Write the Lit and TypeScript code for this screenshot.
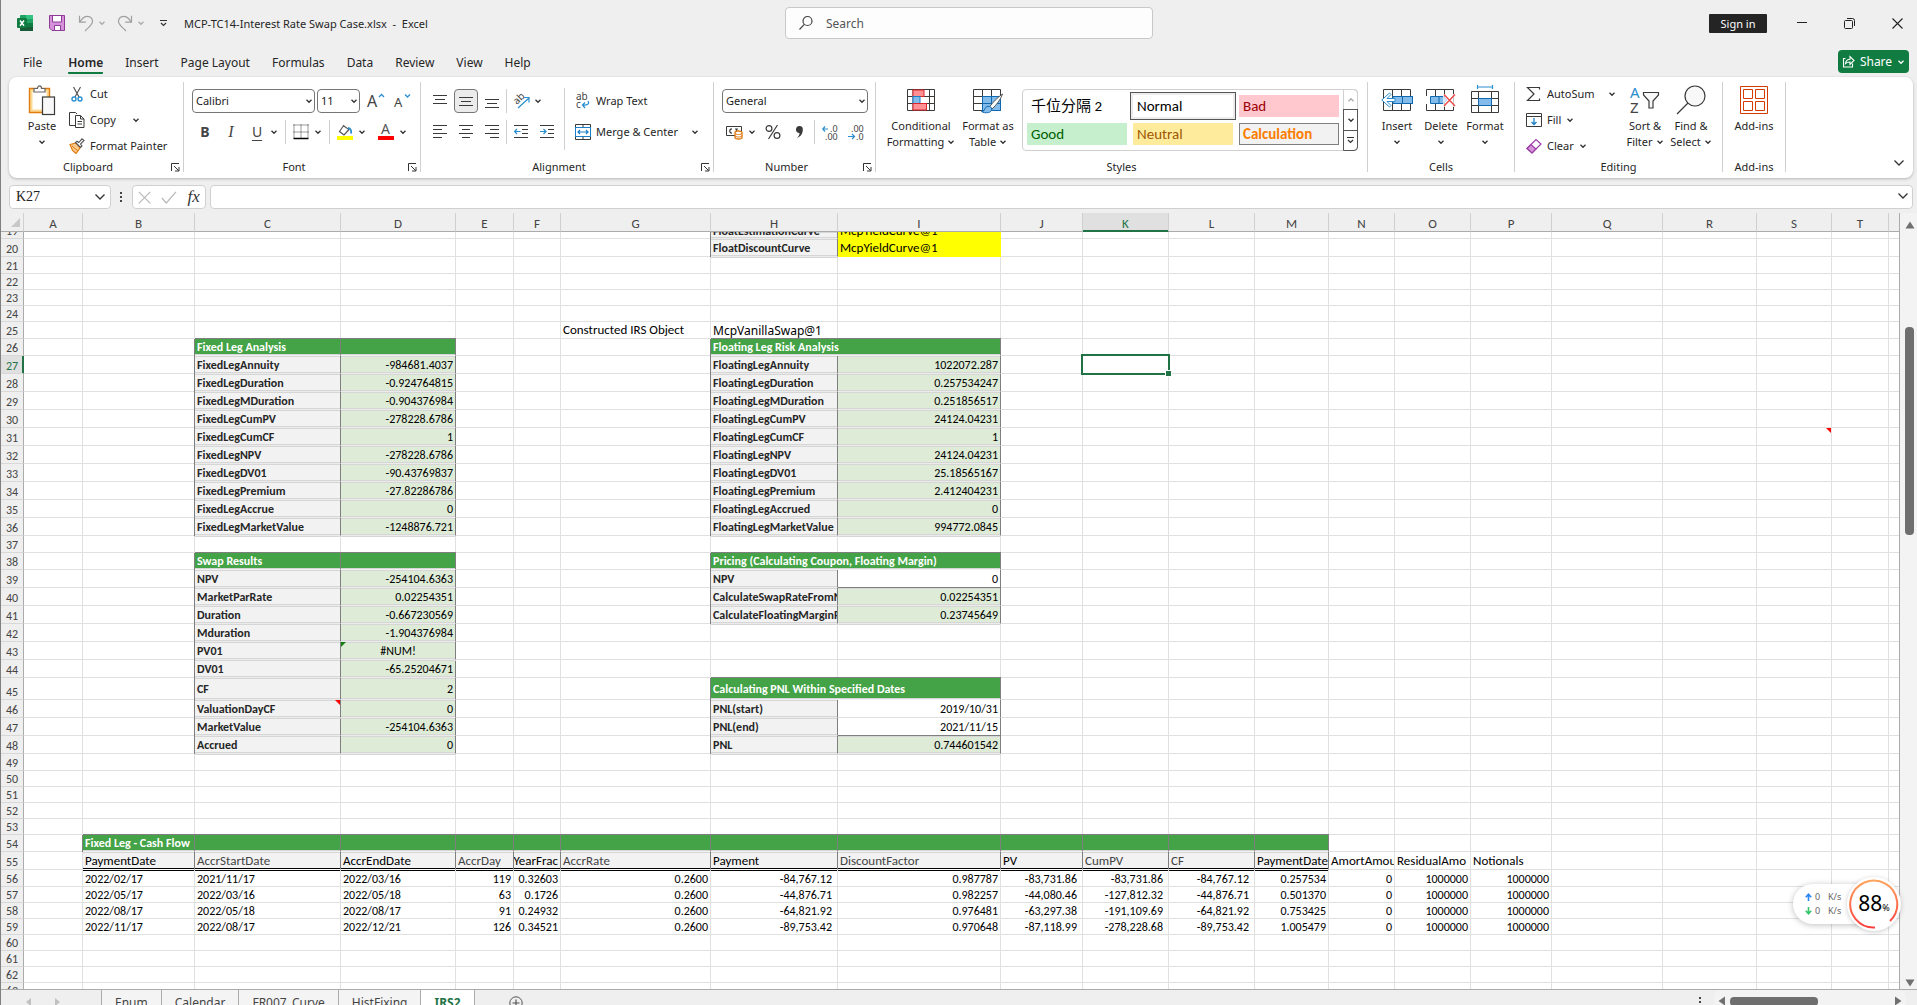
import { LitElement, html, css, svg, nothing, TemplateResult } from 'lit';
import { customElement, state } from 'lit/decorators.js';
import { classMap } from 'lit/directives/class-map.js';

/* ---------- icons ---------- */
const ic = (w: number, h: number, body: unknown) =>
  html`<svg width=${w} height=${h} viewBox="0 0 ${w} ${h}" fill="none" stroke="#3b3a39" aria-hidden="true">${body}</svg>`;

const chev = (color = '#333') => ic(8, 8, svg`<path d="M1.5 2.8 4 5.3 6.500 2.8" stroke=${color} stroke-width="1.3"/>`);
const bigChev = () => ic(12, 8, svg`<path d="M1.500 1.500 6 6 10.500 1.500" stroke="#333" stroke-width="1.3"/>`);

const icons = {
  excel: ic(16, 16, svg`<g stroke="none"><rect x="3" width="13" height="16" rx="1" fill="#21a366"/><rect x="9" width="7" height="4" fill="#33c481"/><rect x="3" y="4" width="6" height="4" fill="#107c41"/><rect x="9" y="8" width="7" height="4" fill="#107c41"/><rect x="3" y="8" width="6" height="8" fill="#185c37"/><rect x="9" y="12" width="7" height="4" fill="#185c37"/><rect y="3" width="10" height="10" rx="1" fill="#107c41"/></g><path d="M3 5.500 7 10.700M7 5.500 3 10.700" stroke="#fff" stroke-width="1.5"/>`),
  save: ic(16, 16, svg`<path d="M.5.5h15v15H3l-2.500-2.500z" fill="#d592d8" stroke="#8d3a99"/><path d="M3.500.5h9V7h-9zM5.500 15.500v-5h6v5z" fill="#fff" stroke="#8d3a99"/>`),
  undo: ic(16, 17, svg`<path d="M1.500.8v6.400h6.300M1.700 6.900 5 3C8 0 14.500 1 14.500 6.500c0 3-2.500 4.500-7.500 9.500" stroke="#a0a0a0" stroke-width="1.2"/>`),
  redo: ic(16, 17, svg`<path d="M14.500.8v6.400H8.200M14.300 6.900 11 3C8 0 1.500 1 1.500 6.500c0 3 2.500 4.500 7.500 9.500" stroke="#a0a0a0" stroke-width="1.2"/>`),
  qat: ic(9, 9, svg`<path d="M1 1.500h7M2 4l2.500 2.500L7 4" stroke="#333" stroke-width="1.2"/>`),
  search: ic(16, 16, svg`<circle cx="9.500" cy="6" r="4.500" stroke="#444" stroke-width="1.2"/><path d="M6.300 9.300 1.500 14.500" stroke="#444" stroke-width="1.200"/>`),
  min: ic(10, 10, svg`<path d="M0 4.500h10" stroke="#222"/>`),
  restore: ic(11, 11, svg`<rect x=".5" y="2.500" width="8" height="8" rx="1" stroke="#222"/><path d="M3 .5h5.500q2 0 2 2V8" stroke="#222"/>`),
  close: ic(11, 11, svg`<path d="m.5.500 10 10m0-10-10 10" stroke="#222" stroke-width="1.100"/>`),
  share: ic(13, 13, svg`<path d="M3.500 3.500h-2v8.500h9V8.500M3.500 8.500c.5-3 2-4.200 4.500-4.200V1.500l4 4-4 4V7c-2 0-3.300.3-4.500 1.500z" stroke="#fff" stroke-width="1.100"/>`),
  paste: ic(28, 32, svg`<path d="M1.500 4.500h20v24h-20z" stroke="#e07b10" fill="#fbd98e" stroke-width="1.400"/><path d="M4.500 7.500h14v18h-14z" fill="#fff" stroke="none"/><path d="M6 8V4.500h3.500C9.500 1 13.500 1 13.500 4.500H17V8z" fill="#fff" stroke="#666" stroke-width="1.200"/><rect x="14.500" y="13" width="12" height="17.500" fill="#f8f8f8" stroke-width="1.200"/>`),
  cut: ic(16, 16, svg`<path d="m4.500 1 5.500 10M11.500 1 6 11" stroke="#555" stroke-width="1.200"/><circle cx="5" cy="13" r="2" stroke="#2a8fd0" stroke-width="1.400"/><circle cx="11" cy="13" r="2" stroke="#2a8fd0" stroke-width="1.400"/>`),
  copy: ic(16, 16, svg`<path d="M6 13.500H.5v-13h6L8 2" /><path d="M6.500 3.500h5l3.500 3.500v8.500H6.500z" fill="#fff"/><path d="M11.500 3.500V7H15M8.500 9.500h4.500M8.500 12h4.500"/>`),
  painter: ic(16, 16, svg`<path d="M1 6.500 7 5l4 5-4 5.500L3.500 12.500z" fill="#fbc98a" stroke="#e07b10" stroke-width="1.200"/><path d="m3 8 6 5" stroke="#e07b10"/><path d="m6.500 4.500 5 5 1.500-1.500-1.500-2L15 2.500 13 .8 9.800 4.500 8 3.200z" fill="#fff" stroke="#555" stroke-width="1.100"/>`),
  growA: ic(18, 18, svg`<text x="0" y="15" font-size="16" fill="#444" stroke="none">A</text><path d="m12 5 2.500-2.500L17 5" stroke="#2a8fd0" stroke-width="1.300"/>`),
  shrinkA: ic(18, 18, svg`<text x="1" y="15" font-size="13" fill="#444" stroke="none">A</text><path d="m12 2.500 2.500 2.500L17 2.500" stroke="#2a8fd0" stroke-width="1.300"/>`),
  borders: ic(16, 16, svg`<path d="M.5 1h15M.5 8h15M1 .5v14M8 .5v14M15 .5v14" stroke-dasharray="1 1"/><path d="M.5 14.500h15" stroke="#000" stroke-width="1.400"/>`),
  fill: ic(16, 18, svg`<path d="m7 2-4.500 6.500L7 12l5-5.500L6 2.500" stroke="#555" stroke-width="1.200"/><path d="M11 5c3 .5 3.500 3 3 5.500" stroke="#2a8fd0" stroke-width="1.800"/><rect y="13" width="16" height="4" fill="#ff0" stroke="none"/>`),
  fontColor: ic(16, 18, svg`<text x="3" y="11" font-size="14" fill="#555" stroke="none">A</text><rect y="13" width="16" height="4" fill="#f00" stroke="none"/>`),
  top: ic(14, 14, svg`<path d="M0 1.500h14M2 5.500h10M0 9.500h14"/>`),
  mid: ic(14, 14, svg`<path d="M0 3.500h14M2 7.500h10M0 11.500h14"/>`),
  bot: ic(14, 14, svg`<path d="M0 5.500h14M2 9.500h10M0 13.500h14"/>`),
  left: ic(14, 14, svg`<path d="M0 .5h14M0 4.500h9M0 8.500h14M0 12.500h9"/>`),
  center: ic(14, 14, svg`<path d="M0 .5h14M3 4.500h8M0 8.500h14M3 12.500h8"/>`),
  right: ic(14, 14, svg`<path d="M0 .5h14M5 4.500h9M0 8.500h14M5 12.500h9"/>`),
  orient: ic(17, 16, svg`<text x="0" y="0" font-size="10" fill="#444" stroke="none" transform="translate(4 12) rotate(-45)">ab</text><path d="m5 15 11-10M11 4.500h5v5" stroke="#2a8fd0" stroke-width="1.200"/>`),
  outdent: ic(14, 14, svg`<path d="M0 .5h14M8 4.500h6M8 8.500h6M0 12.500h14"/><path d="M6.500 6.500H.8M3 4 .7 6.500 3 9" stroke="#2a8fd0" stroke-width="1.200"/>`),
  indent: ic(14, 14, svg`<path d="M0 .5h14M8 4.500h6M8 8.500h6M0 12.500h14"/><path d="M0 6.500h5.700M3.500 4 6 6.500 3.500 9" stroke="#2a8fd0" stroke-width="1.200"/>`),
  wrap: ic(16, 18, svg`<text x="1" y="8" font-size="10" fill="#444" stroke="none">ab</text><text x="1" y="16" font-size="10" fill="#444" stroke="none">c</text><path d="M13 9c2 3-1 4.500-5.500 4M10 10.500 7.500 13l2.500 3" stroke="#2a8fd0" stroke-width="1.300"/>`),
  merge: ic(16, 16, svg`<path d="M.5.500h15v15H.5zM8 .5v3M8 12.500v3"/><rect x=".5" y="3.500" width="15" height="9" fill="#fff" stroke="#1a7fc8"/><path d="M3 8h10M5 6 3 8l2 2M11 6l2 2-2 2" stroke="#1a7fc8" stroke-width="1.200"/>`),
  currency: ic(18, 15, svg`<path d="M.5 1.500h15v9H.5z"/><path d="M6 4C3 3.500 3 8.500 6 8M10.500 4v4M9 4h3" stroke-width="1.200"/><path d="M9 7.500v5c0 2 7 2 7 0v-5c0-2-7-2-7 0z" fill="#fff" stroke="#e07b10" stroke-width="1.300"/><path d="M9 8c0 2 7 2 7 0M9 10.500c0 2 7 2 7 0" stroke="#e07b10"/>`),
  percent: ic(16, 16, svg`<circle cx="4" cy="4.500" r="2.900" stroke-width="1.200"/><circle cx="12" cy="11.500" r="2.900" stroke-width="1.200"/><path d="M12.500 1 3.500 15" stroke-width="1.200"/>`),
  comma: ic(9, 14, svg`<path d="M4.500 1a3.300 3.300 0 0 1 3.300 3.500C7.800 8.500 6 11.500 2 13c1.500-1.500 2.500-3 2.500-5A3.300 3.300 0 0 1 4.500 1z" fill="#3b3a39" stroke="none"/>`),
  incDec: ic(17, 17, svg`<path d="M6 5H1M3 2.500.8 5 3 7.500" stroke="#2a8fd0" stroke-width="1.200"/><text x="8" y="8" font-size="9" fill="#444" stroke="none">.0</text><text x="3" y="16" font-size="9" fill="#444" stroke="none">.00</text>`),
  decDec: ic(17, 17, svg`<text x="3" y="8" font-size="9" fill="#444" stroke="none">.00</text><path d="M0 12.500h6.500M4 10l2.500 2.500L4 15" stroke="#2a8fd0" stroke-width="1.200"/><text x="8" y="16" font-size="9" fill="#444" stroke="none">.0</text>`),
  cond: ic(28, 22, svg`<path d="M.5.500h27v21H.5zM.5 7.500h27M.5 14.500h27M6 .5v21M22.500 .5v21" fill="#fff"/><rect x="6" y="1" width="11" height="6.500" fill="#ff9094" stroke="#d8262c"/><rect x="6" y="7.500" width="7" height="7" fill="#83bbea" stroke="#1a7fc8"/><rect x="6" y="14.500" width="13.500" height="6.500" fill="#ff9094" stroke="#d8262c"/>`),
  table: ic(31, 28, svg`<path d="M.5 3.500h27v21H.5zM.5 10.500h27M.5 17.500h27M9.500 3.500v21M18.500 3.500v21" fill="#fff"/><path d="M9.500 10.500h18v14h-18zM9.500 17.500h18M18.500 10.500v14" fill="#83bbea" stroke="#1068b0"/><path d="M29.500 8C25 11 19 17 16.500 21l2.500 2C23 19.500 28 13 29.500 8z" fill="#fff" stroke="#555"/><path d="M16.500 20.500c3.500 1 2.500 5.500-1 6-3 .6-5 .2-7-1 2.500 0 2.500-1 3.500-3 .8-1.800 2.500-2.500 4.500-2z" fill="#83bbea" stroke="#1068b0"/>`),
  insert: ic(32, 22, svg`<path d="M2.500.5h27v21h-27zM11.500.500v21M20.500.500v21" fill="#fff"/><rect x="12" y="7.500" width="19.500" height="7" fill="#83bbea" stroke="#1068b0"/><path d="M21.500 7.500v7" stroke="#1068b0"/><path d="M14 9.500H6l4-4-1.500-1.500L.8 11l7.700 7L10 16.500l-4-4h8z" fill="#fff" stroke="#2a8fd0"/>`),
  del: ic(30, 22, svg`<path d="M.5.500h27v21H.5zM9.500.500v21M18.500.500v21" fill="#fff"/><path d="M0 7.500h4v7H0z" fill="#fff" stroke="#fff"/><path d="M4.500 7.500H17l4 3.500-4 3.500H4.500zM13 7.500v7" fill="#83bbea" stroke="#1068b0"/><path d="M17 5h12v13H17z" fill="#fff" stroke="none" opacity=".7"/><path d="m18 5.500 11 11.500M29 5.500 18 17" stroke="#f04a4a" stroke-width="1.400"/>`),
  format: ic(28, 32, svg`<path d="M6.500 1v4M21.500 1v4M6.500 3h15" stroke="#2a8fd0" stroke-width="1.200"/><path d="M.5 7.500h27v21H.5zM.5 14.500h27M.5 21.500h27M7.500 7.500v21M20.500 7.500v21" fill="#fff"/><rect x="7.500" y="14.500" width="13" height="7" fill="#83bbea" stroke="#1068b0"/>`),
  sum: ic(16, 16, svg`<path d="M13.500 3.500v-2H1.500l6.500 6.500-6.500 6.500h12v-2" stroke-width="1.200"/>`),
  fillDown: ic(16, 16, svg`<path d="M.5 1.500h15v13H.5zM.5 4.500h15"/><path d="M8 6v6.500M5.500 10 8 12.500 10.500 10" stroke="#1a7fc8" stroke-width="1.300"/>`),
  clear: ic(16, 16, svg`<path d="m1 10.500 9-9 5 4.500-9 9z" fill="#fff" stroke="#9b3fa5" stroke-width="1.200"/><path d="m1 10.500 4-4 5 4.500-4 4z" fill="#d592d8" stroke="#9b3fa5" stroke-width="1.200"/>`),
  sort: ic(30, 28, svg`<text x="0" y="12" font-size="15" fill="#2a8fd0" stroke="none">A</text><text x="0" y="27" font-size="15" fill="#444" stroke="none">Z</text><path d="M13.500 6.500h15v2.500l-5.500 6v7h-4v-7l-5.500-6z" fill="#f8f8f8" stroke-width="1.200"/>`),
  find: ic(30, 30, svg`<circle cx="19" cy="11" r="10" fill="#f8f8f8" stroke-width="1.200"/><path d="M12 18 1 29" stroke-width="1.200"/>`),
  addins: ic(28, 28, svg`<path d="M.5.500h27v27H.5zM3.500 3.500h9v9h-9zM15.500 3.500h9v9h-9zM3.500 15.500h9v9h-9zM15.500 15.500h9v9h-9z" stroke="#d83b01" fill="#fff"/>`),
  launch: ic(9, 9, svg`<path d="M.5 8V.500H8M3 3l4.500 4.500M8 4v4H4" stroke="#333"/>`),
  scrollUp: ic(10, 8, svg`<path d="M5 .5 9.500 7.500H.5z" fill="#707070" stroke="none"/>`),
  scrollDown: ic(10, 8, svg`<path d="M5 7.500 9.500.5H.5z" fill="#707070" stroke="none"/>`),
  plus: ic(14, 14, svg`<circle cx="7" cy="7" r="6.200" stroke="#555"/><path d="M7 3.500v7M3.500 7h7" stroke="#555" stroke-width="1.200"/>`),
};

/* ---------- sheet data ---------- */
type Cell = { t?: string; c?: string; span?: number; mark?: 'red' | 'green'; sel?: boolean };
const COLS = 'ABCDEFGHIJKLMNOPQRSTU'.split('');
const WIDTHS = [59, 112, 146, 115, 58, 47, 150, 127, 163, 82, 86, 86, 74, 66, 76, 81, 111, 94, 75, 57];
const heights = (r: number) =>
  r === 19 ? 7 : r === 45 ? 22 : [21, 25, 26, 37, 38, 49, 54, 56].includes(r) ? 17
    : r === 20 || (r >= 27 && r <= 48) || r === 55 ? 18 : 16;

const cells: Record<string, Cell> = {
  H19: { t: 'FloatEstimationCurve', c: 'lab first' }, I19: { t: 'McpYieldCurve@1', c: 'yellow' },
  H20: { t: 'FloatDiscountCurve', c: 'lab first' }, I20: { t: 'McpYieldCurve@1', c: 'yellow' },
  G25: { t: 'Constructed IRS Object', c: 'note' }, H25: { t: 'McpVanillaSwap@1', c: 'wide' },
  C26: { t: 'Fixed Leg Analysis', c: 'head first' }, D26: { c: 'head' },
  H26: { t: 'Floating Leg Risk Analysis', c: 'head first', span: 2 },
  C38: { t: 'Swap Results', c: 'head first' }, D38: { c: 'head' },
  H38: { t: 'Pricing (Calculating Coupon, Floating Margin)', c: 'head first', span: 2 },
  H45: { t: 'Calculating PNL Within Specified Dates', c: 'head first', span: 2 },
  K27: { sel: true }, S31: { mark: 'red' },
};
const pairs = (lc: string, vc: string, start: number, rows: [string, string, string?][]) =>
  rows.forEach(([l, v, cls], i) => {
    cells[lc + (start + i)] = { t: l, c: 'lab first' };
    cells[vc + (start + i)] = { t: v, c: cls ?? 'val num' };
  });
pairs('C', 'D', 27, [['FixedLegAnnuity', '-984681.4037'], ['FixedLegDuration', '-0.924764815'], ['FixedLegMDuration', '-0.904376984'], ['FixedLegCumPV', '-278228.6786'], ['FixedLegCumCF', '1'], ['FixedLegNPV', '-278228.6786'], ['FixedLegDV01', '-90.43769837'], ['FixedLegPremium', '-27.82286786'], ['FixedLegAccrue', '0'], ['FixedLegMarketValue', '-1248876.721']]);
pairs('H', 'I', 27, [['FloatingLegAnnuity', '1022072.287'], ['FloatingLegDuration', '0.257534247'], ['FloatingLegMDuration', '0.251856517'], ['FloatingLegCumPV', '24124.04231'], ['FloatingLegCumCF', '1'], ['FloatingLegNPV', '24124.04231'], ['FloatingLegDV01', '25.18565167'], ['FloatingLegPremium', '2.412404231'], ['FloatingLegAccrued', '0'], ['FloatingLegMarketValue', '994772.0845']]);
pairs('C', 'D', 39, [['NPV', '-254104.6363'], ['MarketParRate', '0.02254351'], ['Duration', '-0.667230569'], ['Mduration', '-1.904376984'], ['PV01', '#NUM!', 'val mid'], ['DV01', '-65.25204671'], ['CF', '2'], ['ValuationDayCF', '0'], ['MarketValue', '-254104.6363'], ['Accrued', '0']]);
pairs('H', 'I', 39, [['NPV', '0', 'plain num end'], ['CalculateSwapRateFromNPV', '0.02254351'], ['CalculateFloatingMarginFromNPV', '0.23745649']]);
pairs('H', 'I', 46, [['PNL(start)', '2019/10/31', 'plain num'], ['PNL(end)', '2021/11/15', 'plain num end'], ['PNL', '0.744601542']]);
cells.D43.mark = 'green';
cells.C46.mark = 'red';

'BCDEFGHIJKLM'.split('').forEach((c, i) => (cells[c + 54] = i === 0 ? { t: 'Fixed Leg - Cash Flow', c: 'head first' } : { c: 'head' }));
['PaymentDate', 'AccrStartDate', 'AccrEndDate', 'AccrDay', 'YearFrac', 'AccrRate', 'Payment', 'DiscountFactor', 'PV', 'CumPV', 'CF', 'PaymentDate'].forEach((t, i) => {
  cells[COLS[i + 1] + 55] = { t, c: 'field' + ([1, 3, 5, 7, 9, 10].includes(i) ? ' dim' : '') + (i === 4 ? ' tail' : '') };
});
cells.N55 = { t: 'AmortAmou', c: 'note' }; cells.O55 = { t: 'ResidualAmo', c: 'note' }; cells.P55 = { t: 'Notionals', c: 'note' };
[
  ['2022/02/17', '2021/11/17', '2022/03/16', '119', '0.32603', '0.2600', '-84,767.12', '0.987787', '-83,731.86', '-83,731.86', '-84,767.12', '0.257534', '0', '1000000', '1000000'],
  ['2022/05/17', '2022/03/16', '2022/05/18', '63', '0.1726', '0.2600', '-44,876.71', '0.982257', '-44,080.46', '-127,812.32', '-44,876.71', '0.501370', '0', '1000000', '1000000'],
  ['2022/08/17', '2022/05/18', '2022/08/17', '91', '0.24932', '0.2600', '-64,821.92', '0.976481', '-63,297.38', '-191,109.69', '-64,821.92', '0.753425', '0', '1000000', '1000000'],
  ['2022/11/17', '2022/08/17', '2022/12/21', '126', '0.34521', '0.2600', '-89,753.42', '0.970648', '-87,118.99', '-278,228.68', '-89,753.42', '1.005479', '0', '1000000', '1000000'],
].forEach((row, r) => row.forEach((t, i) => {
  cells[COLS[i + 1] + (56 + r)] = { t, c: i < 3 ? 'date' : [6, 8, 9, 10].includes(i) ? 'num acct' : 'num' };
}));

@customElement('excel-sheet')
export class ExcelSheet extends LitElement {
  static styles = css`
    :host { display: block; flex: 1; min-width: 0; overflow: hidden; border-right: 1px solid #ababab; background: #fff; font-family: Carlito, Calibri, Lato, sans-serif; }
    table { width: 100%; table-layout: fixed; border-collapse: separate; border-spacing: 0; font-size: 13px; line-height: 14px; color: #000; }
    th, td { padding: 0; border-right: 1px solid #e0e0e0; border-bottom: 1px solid #e0e0e0; white-space: nowrap; vertical-align: bottom; text-align: left; }
    th { background: #efefef; color: #444; font-weight: 400; text-align: center; }
    thead tr { height: 19px; }
    thead th { border-right-color: #d0d0d0; border-bottom-color: #ababab; }
    thead th:last-child { border-right: 0; }
    tbody th { border-right-color: #ababab; border-bottom-color: #d8d8d8; font-size: 12px; }
    td:last-child { border-right: 0; }
    th.on { background: #e0e0e0; color: #217346; }
    thead th.on { box-shadow: inset 0 -1px #217346; border-bottom-color: #217346; }
    tbody th.on { border-right-color: #217346; box-shadow: inset -1px 0 #217346; }
    .corner svg { display: block; margin: 0 3px 4px auto; }
    .txt { overflow: hidden; padding: 0 2px; }
    .part { height: 6px; display: flex; align-items: flex-end; }
    th .part { justify-content: center; overflow: hidden; }
    .num .txt { text-align: right; }
    .num, .date, .lab, .val, .head { font-size: 12px; }
    .acct .txt { padding-right: 5px; }
    .mid .txt { text-align: center; }
    .wide { font-family: "Noto Sans", sans-serif; font-size: 12px; }
    .yellow { background: #ff0; border-color: #ff0; }
    .lab, .val, .plain, .head, .yellow, .field, .note { vertical-align: middle; }
    .lab, .val { border-right-color: #7f7f7f; border-bottom-color: #ebebeb; box-shadow: inset 0 1px #d6d6d6, inset 0 -1px #d6d6d6, 0 1px #d6d6d6; }
    .lab { background: #f2f2f2; color: #262626; font-weight: 700; }
    .val { background: #deebd7; }
    .lab.first { box-shadow: -1px 0 #7f7f7f, inset 0 1px #d6d6d6, inset 0 -1px #d6d6d6, 0 1px #d6d6d6; }
    .plain { border-right-color: #7f7f7f; background: #fff; }
    .end { border-bottom-color: #7f7f7f; }
    .head { background: #43a346; color: #fff; font-weight: 700; border-right-color: #7f7f7f; border-bottom-color: #f2f2f2; box-shadow: 0 -1px #7f7f7f, inset 0 -1px #d6d6d6; }
    .head.first { box-shadow: -1px 0 #7f7f7f, 0 -1px #7f7f7f, inset 0 -1px #d6d6d6; }
    .field { background: #f2f2f2; border-right-color: #7f7f7f; border-bottom-color: #fff; box-shadow: inset 0 1px #d6d6d6, inset 0 -1px #000, 0 1px #000; }
    .dim { color: #444; }
    .tail .txt { display: flex; justify-content: flex-end; }
    .anchor { position: relative; }
    .mark { position: absolute; top: 0; width: 5px; height: 5px; }
    .mark.red { right: 0; background: #f00; clip-path: polygon(0 0, 100% 0, 100% 100%); }
    .mark.green { left: 0; background: #107c10; clip-path: polygon(0 0, 100% 0, 0 100%); }
    .cursor { position: absolute; inset: -2px; border: 2px solid #217346; }
    .cursor::after { content: ""; position: absolute; right: -3px; bottom: -3px; width: 5px; height: 5px; background: #217346; box-shadow: 0 0 0 1px #fff; }
  `;
  private row(r: number): TemplateResult {
    const out: TemplateResult[] = [];
    for (let i = 0; i < COLS.length; i++) {
      const d = cells[COLS[i] + r];
      if (!d) { out.push(html`<td></td>`); continue; }
      const anchored = d.mark || d.sel;
      out.push(html`<td class="${d.c ?? ''} ${anchored ? 'anchor' : ''}" colspan=${d.span ?? 1}>${d.t
        ? html`<div class="txt ${r === 19 ? 'part' : ''}">${r === 19 ? html`<span>${d.t}</span>` : d.t}</div>` : nothing}${d.mark
        ? html`<i class="mark ${d.mark}"></i>` : nothing}${d.sel ? html`<i class="cursor"></i>` : nothing}</td>`);
      i += (d.span ?? 1) - 1;
    }
    return html`<tr style="height:${heights(r)}px"><th scope="row" class=${classMap({ on: r === 27 })}>${r === 19 ? html`<div class="part">19</div>` : r}</th>${out}</tr>`;
  }
  render() {
    return html`<table>
      <colgroup><col style="width:23px">${WIDTHS.map(w => html`<col style="width:${w}px">`)}<col></colgroup>
      <thead><tr><th class="corner">${ic(9, 9, svg`<path d="M9 0v9H0z" fill="#c8c8c8" stroke="none"/>`)}</th>${COLS.map(c => html`<th scope="col" class=${classMap({ on: c === 'K' })}>${c === 'U' ? nothing : c}</th>`)}</tr></thead>
      <tbody>${Array.from({ length: 45 }, (_, i) => this.row(19 + i))}</tbody>
    </table>`;
  }
}

@customElement('excel-ribbon')
export class ExcelRibbon extends LitElement {
  static styles = css`
    :host { display: flex; margin: 0 4px 0 8px; height: 101px; background: #fff; border-radius: 8px; box-shadow: 0 1px 3px rgba(0, 0, 0, .25); overflow: hidden; font-family: "Noto Sans", sans-serif; font-size: 11px; line-height: 16px; color: #262626; }
    svg { display: block; flex: none; font-family: "Noto Sans", sans-serif; }
    button { border: 0; background: none; padding: 0; margin: 0; font: inherit; color: inherit; display: flex; align-items: center; justify-content: center; white-space: nowrap; }
    .group { display: flex; flex-direction: column; flex: none; }
    .body { display: flex; height: 82px; }
    .foot { display: flex; align-items: center; height: 16px; }
    .foot span { flex: 1; text-align: center; }
    .foot button { width: 16px; height: 16px; }
    .sep { width: 1px; flex: none; background: #d0d0d0; margin: 5px 0 6px; }
    .big { flex-direction: column; justify-content: flex-start; padding-top: 5px; }
    .big .pic { height: 36px; display: flex; align-items: center; }
    .big .line { display: flex; align-items: center; gap: 3px; height: 16px; }
    .list { display: flex; flex-direction: column; padding-top: 4px; }
    .list button { height: 26px; gap: 5px; justify-content: flex-start; }
    .rows { display: flex; flex-direction: column; gap: 7px; padding-top: 12px; }
    .row { display: flex; align-items: center; height: 24px; }
    .t { width: 26px; height: 24px; }
    .split { width: 38px; height: 24px; justify-content: flex-start; }
    .split > span { width: 26px; display: flex; justify-content: center; }
    .on { width: 24px; margin: 0 1px; box-sizing: border-box; border: 1px solid #777; border-radius: 4px; background: #ebebeb; }
    .line-v { width: 1px; height: 24px; background: #d0d0d0; margin: 0 1px; }
    .tall { width: 1px; height: 62px; background: #d0d0d0; margin: 11px 10px 0 4px; }
    .glyph { font-size: 14px; color: #444; }
    .bold { font-weight: 700; }
    .ital { font-family: "Liberation Serif", serif; font-style: italic; font-size: 16px; }
    .und { text-decoration: underline; text-underline-offset: 3px; }
    .drop { position: relative; }
    select { appearance: none; width: 100%; height: 24px; border: 1px solid #767676; border-radius: 4px; background: #fff; padding: 0 4px 0 3px; font: inherit; color: #222; }
    .drop svg { position: absolute; right: 2px; top: 8px; pointer-events: none; }
    .w-font { width: 123px; } .w-size { width: 43px; margin: 0 3px 0 2px; } .w-num { width: 146px; }
    .cmd { gap: 5px; height: 24px; justify-content: flex-start; }
    .gap { width: 6px; } .gap.m { width: 3px; } .gap.s { width: 0; }
    .list .m { width: 3px; }
    .gallery { display: flex; box-sizing: border-box; width: 336px; height: 62px; margin: 12px 0 0 2px; border: 1px solid #d0d0d0; border-radius: 4px; }
    .styles { flex: 1; display: grid; grid-template-columns: repeat(3, 100px); grid-auto-rows: 22px; gap: 6px; padding: 5px 0 0 4px; }
    .styles button { justify-content: flex-start; padding: 0 0 1px 4px; font-family: Carlito, Calibri, Lato, "Noto Sans CJK SC", sans-serif; font-size: 15px; color: #000; }
    .styles .normal { outline: 1px solid #555; outline-offset: 2px; box-shadow: 0 0 0 2px #ececec; }
    .styles .bad { background: #ffc7ce; color: #9c0006; }
    .styles .good { background: #c6efce; color: #006100; }
    .styles .neutral { background: #ffeb9c; color: #9c5700; }
    .styles .calc { background: #f2f2f2; border: 1px solid #7f7f7f; color: #fa7d00; font-weight: 700; padding-left: 3px; }
    .nav { width: 15px; display: flex; flex-direction: column; margin: -1px; }
    .nav button { flex: 1; border: 1px solid #555; margin-top: -1px; }
    .nav button:first-child { border-color: #d0d0d0; border-radius: 0 4px 0 0; margin-top: 0; }
    .nav button:last-child { border-radius: 0 0 4px 0; }
    .p-clip { padding-left: 14px; } .p-clip .big { width: 38px; margin-right: 8px; }
    .rest { flex: 1; display: flex; justify-content: flex-end; align-items: flex-end; }
    .rest button { padding: 11px 8px; }
    .g1 { width: 174px; } .g2 { width: 236px; } .g3 { width: 292px; } .g4 { width: 161px; } .g5 { width: 491px; } .g6 { width: 146px; } .g7 { width: 207px; } .g8 { width: 62px; }
    .g2 .body, .g4 .body { padding-left: 8px; }
    .g2 .line-v { margin: 0 2px 0 3px; }
    .g2 .split + .split { margin-left: 3px; }
    .g4 .line-v { margin: 0 2px; }
    .g3 .body { padding-left: 6px; }
    .g6 .body { padding-left: 7px; }
    .g5 .body { padding-left: 10px; }
    .g5 .big { width: 70px; } .g5 .big + .big { width: 64px; }
    .g6 .big { width: 44px; }
    .g7 .body { padding-left: 11px; } .g7 .list { width: 96px; } .g7 .big { width: 46px; }
    .g8 .big { width: 62px; }
    .flip { transform: rotate(180deg); }
  `;
  private group(cls: string, name: string, body: TemplateResult, launch = false) {
    return html`<section class="group ${cls}" aria-label=${name}><div class="body">${body}</div>
      <div class="foot"><span>${name}</span>${launch ? html`<button aria-label="${name} settings">${icons.launch}</button>` : nothing}</div></section><div class="sep"></div>`;
  }
  private big(icon: TemplateResult, l1: string, l2: string, arrow = true) {
    return html`<button class="big"><span class="pic">${icon}</span><span class="line">${l1}</span><span class="line">${l2}${arrow ? chev() : nothing}</span></button>`;
  }
  private split(label: string, icon: unknown) {
    return html`<button class="split" aria-label=${label}><span>${icon}</span>${chev()}</button>`;
  }
  private tool(label: string, icon: unknown, cls = '') {
    return html`<button class="t ${cls}" aria-label=${label}>${icon}</button>`;
  }
  private drop(cls: string, label: string, v: string) {
    return html`<div class="drop ${cls}"><select aria-label=${label}><option>${v}</option></select>${chev()}</div>`;
  }
  render() {
    const bar = html`<span class="line-v"></span>`;
    return html`
      ${this.group('g1', 'Clipboard', html`<div class="body p-clip">${this.big(icons.paste, 'Paste', '')}
        <div class="list"><button>${icons.cut}Cut</button><button>${icons.copy}Copy<span class="gap"></span>${chev()}</button><button>${icons.painter}Format Painter</button></div></div>`, true)}
      ${this.group('g2', 'Font', html`<div class="rows">
        <div class="row">${this.drop('w-font', 'Font', 'Calibri')}${this.drop('w-size', 'Font size', '11')}${this.tool('Increase font size', icons.growA)}${this.tool('Decrease font size', icons.shrinkA)}</div>
        <div class="row">${this.tool('Bold', 'B', 'glyph bold')}${this.tool('Italic', 'I', 'glyph ital')}${this.split('Underline', html`<span class="glyph und">U</span>`)}${bar}${this.split('Borders', icons.borders)}${bar}${this.split('Fill color', icons.fill)}${this.split('Font color', icons.fontColor)}</div></div>`, true)}
      ${this.group('g3', 'Alignment', html`<div class="rows">
        <div class="row">${this.tool('Top align', icons.top)}${this.tool('Middle align', icons.mid, 'on')}${this.tool('Bottom align', icons.bot)}${bar}${this.split('Orientation', icons.orient)}</div>
        <div class="row">${this.tool('Align left', icons.left)}${this.tool('Center', icons.center)}${this.tool('Align right', icons.right)}${bar}${this.tool('Decrease indent', icons.outdent)}${this.tool('Increase indent', icons.indent)}</div></div>
        <div class="tall"></div>
        <div class="rows"><button class="cmd">${icons.wrap}Wrap Text</button><button class="cmd">${icons.merge}Merge &amp; Center<span class="gap m"></span>${chev()}</button></div>`, true)}
      ${this.group('g4', 'Number', html`<div class="rows">
        <div class="row">${this.drop('w-num', 'Number format', 'General')}</div>
        <div class="row">${this.split('Accounting format', icons.currency)}${this.tool('Percent style', icons.percent)}${this.tool('Comma style', icons.comma)}${bar}${this.tool('Increase decimal', icons.incDec)}${this.tool('Decrease decimal', icons.decDec)}</div></div>`, true)}
      ${this.group('g5', 'Styles', html`${this.big(icons.cond, 'Conditional', 'Formatting')}${this.big(icons.table, 'Format as', 'Table')}
        <div class="gallery"><div class="styles"><button>千位分隔 2</button><button class="normal">Normal</button><button class="bad">Bad</button><button class="good">Good</button><button class="neutral">Neutral</button><button class="calc">Calculation</button></div>
        <div class="nav"><button aria-label="Previous styles"><span class="flip">${chev('#aaa')}</span></button><button aria-label="Next styles">${chev()}</button><button aria-label="More styles">${icons.qat}</button></div></div>`)}
      ${this.group('g6', 'Cells', html`${this.big(icons.insert, 'Insert', '')}${this.big(icons.del, 'Delete', '')}${this.big(icons.format, 'Format', '')}`)}
      ${this.group('g7', 'Editing', html`<div class="list"><button>${icons.sum}AutoSum<span class="m"></span>${chev()}</button><button>${icons.fillDown}Fill${chev()}</button><button>${icons.clear}Clear${chev()}</button></div>
        ${this.big(icons.sort, 'Sort &', 'Filter')}${this.big(icons.find, 'Find &', 'Select')}`)}
      ${this.group('g8', 'Add-ins', this.big(icons.addins, 'Add-ins', '', false))}
      <div class="rest"><button aria-label="Collapse ribbon">${bigChev()}</button></div>`;
  }
}

@customElement('app-root')
export class AppRoot extends LitElement {
  static styles = css`
    :host { display: flex; flex-direction: column; height: 100vh; box-sizing: border-box; border-left: 1px solid #808080; background: #efefef; overflow: hidden; position: relative; font-family: "Noto Sans", sans-serif; font-size: 11px; color: #262626; }
    svg { display: block; flex: none; }
    button { border: 0; background: none; padding: 0; margin: 0; font: inherit; color: inherit; display: flex; align-items: center; justify-content: center; white-space: nowrap; }
    .title { display: grid; grid-template-columns: 196fr minmax(200px, 368px) 191fr; align-items: center; height: 46px; flex: none; }
    .left { display: flex; align-items: center; padding-left: 16px; }
    .left .save { margin-left: 16px; }
    .left .und { margin-left: 13px; gap: 4px; }
    .left .red { margin-left: 11px; gap: 4px; }
    .left .more { margin-left: 14px; }
    .left h1 { margin: 0 0 0 16px; font: inherit; white-space: pre; }
    .search { display: flex; align-items: center; gap: 12px; height: 30px; border: 1px solid #c8c8c8; border-radius: 4px; background: #fdfdfd; padding: 0 12px; }
    .search input { flex: 1; border: 0; outline: 0; background: none; font: inherit; font-size: 12px; color: #444; padding: 0; }
    .search input::placeholder { color: #555; opacity: 1; }
    .right { display: flex; justify-content: flex-end; align-items: center; padding-right: 14px; }
    .signin { background: #242424; color: #fff; width: 58px; height: 19px; border-radius: 1px; margin-right: 29px; }
    .win { width: 11px; height: 16px; margin-left: 37px; }
    .signin + .win { margin-left: 0; }
    .tabs { display: flex; align-items: flex-start; height: 31px; flex: none; padding: 0 8px 0 11px; font-size: 12px; }
    .tabs nav { display: flex; flex: 1; }
    .tabs a { color: inherit; text-decoration: none; line-height: 16px; padding: 9px 0 1px; margin: 0 11px; border-bottom: 2px solid transparent; }
    .tabs a:first-child { margin-right: 15px; }
    .tabs a.on { font-weight: 600; border-color: #107c41; border-radius: 1px; }
    .share { gap: 5px; background: #107c41; color: #fff; width: 71px; height: 23px; border-radius: 4px; margin-top: 4px; }
    .formula { display: flex; height: 24px; margin: 7px 4px 4px 8px; flex: none; }
    .box { box-sizing: border-box; height: 24px; background: #fff; border: 1px solid #d0d0d0; border-radius: 4px; display: flex; align-items: center; }
    .name { width: 102px; padding: 0 4px 0 6px; }
    .name input { flex: 1; min-width: 0; border: 0; outline: 0; padding: 0; background: none; font: 14px "Liberation Serif", serif; color: #222; }
    .dots { width: 21px; display: flex; justify-content: center; align-items: center; }
    .ops { width: 74px; justify-content: space-around; }
    .fx { font: italic 17px "Liberation Serif", serif; color: #333; }
    .entry { flex: 1; margin-left: 4px; padding-right: 3px; }
    .entry input { flex: 1; border: 0; outline: 0; background: none; font: inherit; padding: 0 4px; }
    .entry button { margin-top: -3px; }
    .main { flex: 1; min-height: 0; display: flex; }
    .vbar { width: 17px; display: flex; flex-direction: column; align-items: center; background: #f3f3f3; padding: 8px 0 2px 2px; box-sizing: border-box; }
    .track { flex: 1; width: 9px; display: flex; flex-direction: column; }
    .track::before { content: ""; flex: 98; }
    .track::after { content: ""; flex: 443; }
    .thumb { flex: 208; border-radius: 4px; background: #6e6e6e; }
    .foot { flex: none; height: 16px; overflow: hidden; display: flex; align-items: flex-start; border-top: 1px solid #ababab; box-sizing: border-box; }
    .sheets { display: flex; font-size: 12px; line-height: 16px; flex: 1; margin-top: -1px; }
    .arrows { width: 100px; display: flex; gap: 23px; padding: 9px 0 0 25px; box-sizing: border-box; }
    .sheets a { color: #444; text-decoration: none; background: #f4f4f4; border-left: 1px solid #ababab; border-top: 1px solid #ababab; padding: 5px 13px 4px; }
    .sheets a.on { background: #fff; color: #217346; font-weight: 700; border-right: 1px solid #ababab; border-top-color: #fff; }
    .sheets button { margin: 7px 0 0 34px; height: 14px; }
    .hbar { display: flex; align-items: center; width: 192px; height: 22px; margin: 0 11px 0 12px; gap: 4px; padding: 0 4px; box-sizing: border-box; background: #f3f3f3; border-radius: 8px; }
    .hbar i { width: 88px; height: 9px; border-radius: 4px; background: #6e6e6e; }
    .hbar .end { margin-left: auto; }
    .hdots { padding-top: 6px; }
    .meter { position: absolute; right: 16px; bottom: 74px; display: flex; align-items: center; }
    .rates { box-sizing: border-box; width: 84px; height: 40px; margin-right: -30px; border-radius: 20px; background: #fff; box-shadow: 0 1px 6px rgba(0, 0, 0, .25); display: grid; grid-template-columns: 8px 11px auto; align-content: center; justify-content: start; align-items: center; gap: 0 2px; padding-left: 12px; font-size: 9px; line-height: 14px; color: #666; }
    .dial { position: relative; width: 54px; height: 54px; border-radius: 50%; background: #fff; box-shadow: 0 1px 5px rgba(0, 0, 0, .2); }
    .dial p { position: absolute; inset: 0; margin: 0; display: flex; align-items: baseline; justify-content: center; font-size: 21px; line-height: 52px; color: #000; }
    .dial small { font-size: 9px; }
  `;
  @state() private tab = 'Home';
  render() {
    const dots = ic(3, 12, svg`<g fill="#444" stroke="none"><rect x="0" y="1" width="2" height="2"/><rect x="0" y="5" width="2" height="2"/><rect x="0" y="9" width="2" height="2"/></g>`);
    return html`
      <header class="title">
        <div class="left">${icons.excel}<button class="save" aria-label="Save">${icons.save}</button>
          <button class="und" aria-label="Undo">${icons.undo}${chev('#aaa')}</button><button class="red" aria-label="Redo">${icons.redo}${chev('#aaa')}</button>
          <button class="more" aria-label="Customize toolbar">${icons.qat}</button><h1>MCP-TC14-Interest Rate Swap Case.xlsx  -  Excel</h1></div>
        <label class="search">${icons.search}<input type="search" placeholder="Search" aria-label="Search"></label>
        <div class="right"><button class="signin">Sign in</button><button class="win" aria-label="Minimize">${icons.min}</button><button class="win" aria-label="Restore">${icons.restore}</button><button class="win" aria-label="Close">${icons.close}</button></div>
      </header>
      <div class="tabs"><nav>${['File', 'Home', 'Insert', 'Page Layout', 'Formulas', 'Data', 'Review', 'View', 'Help'].map(t => html`<a href="#" class=${classMap({ on: t === this.tab })} @click=${(e: Event) => { e.preventDefault(); this.tab = t; }}>${t}</a>`)}</nav>
        <button class="share">${icons.share}Share${chev('#fff')}</button></div>
      <excel-ribbon></excel-ribbon>
      <div class="formula">
        <label class="box name"><input aria-label="Name box" value="K27">${bigChev()}</label>
        <div class="dots">${dots}</div>
        <div class="box ops"><button aria-label="Cancel">${ic(13, 13, svg`<path d="m.8.800 11.500 11.500m0-11.500L.8 12.300" stroke="#b8b8b8" stroke-width="1.200"/>`)}</button><button aria-label="Enter">${ic(16, 13, svg`<path d="m.8 7 4.500 5L15 .8" stroke="#b8b8b8" stroke-width="1.200"/>`)}</button><button class="fx" aria-label="Insert function">fx</button></div>
        <div class="box entry"><input aria-label="Formula"><button aria-label="Expand formula bar">${bigChev()}</button></div>
      </div>
      <div class="main"><excel-sheet></excel-sheet>
        <div class="vbar">${icons.scrollUp}<div class="track"><div class="thumb"></div></div>${icons.scrollDown}</div></div>
      <footer class="foot"><nav class="sheets"><span class="arrows">${ic(6, 8, svg`<path d="M5 0v8L0 4z" fill="#c0c0c0" stroke="none"/>`)}${ic(6, 8, svg`<path d="M0 0v8l5-4z" fill="#c0c0c0" stroke="none"/>`)}</span>
        ${['Enum', 'Calendar', 'FR007_Curve', 'HistFixing', 'IRS2'].map(t => html`<a href="#" class=${classMap({ on: t === 'IRS2' })}>${t}</a>`)}<button aria-label="New sheet">${icons.plus}</button></nav>
        <span class="hdots">${dots}</span>
        <div class="hbar">${ic(8, 10, svg`<path d="M7 .5v9L.5 5z" fill="#707070" stroke="none"/>`)}<i></i><span class="end">${ic(8, 10, svg`<path d="M1 .5v9L7.500 5z" fill="#707070" stroke="none"/>`)}</span></div></footer>
      <aside class="meter"><div class="rates">
        ${ic(7, 8, svg`<path d="M3.500 8V2M.8 4.200 3.500 1.200 6.200 4.200" stroke="#2a86f0" stroke-width="1.600"/>`)}<span>0</span><span>K/s</span>
        ${ic(7, 8, svg`<path d="M3.500 0v6M.8 3.800 3.500 6.800 6.200 3.800" stroke="#35c46a" stroke-width="1.600"/>`)}<span>0</span><span>K/s</span></div>
        <div class="dial">${ic(54, 54, svg`<defs><linearGradient id="g" x1="0" y1="0" x2="0" y2="1"><stop offset="0" stop-color="#ffa45c"/><stop offset="1" stop-color="#fb4040"/></linearGradient></defs><path d="M28 50.500A23.500 23.500 0 1 1 43 44" stroke="url(#g)" stroke-width="2"/>`)}<p>88<small>%</small></p></div></aside>`;
  }
}
